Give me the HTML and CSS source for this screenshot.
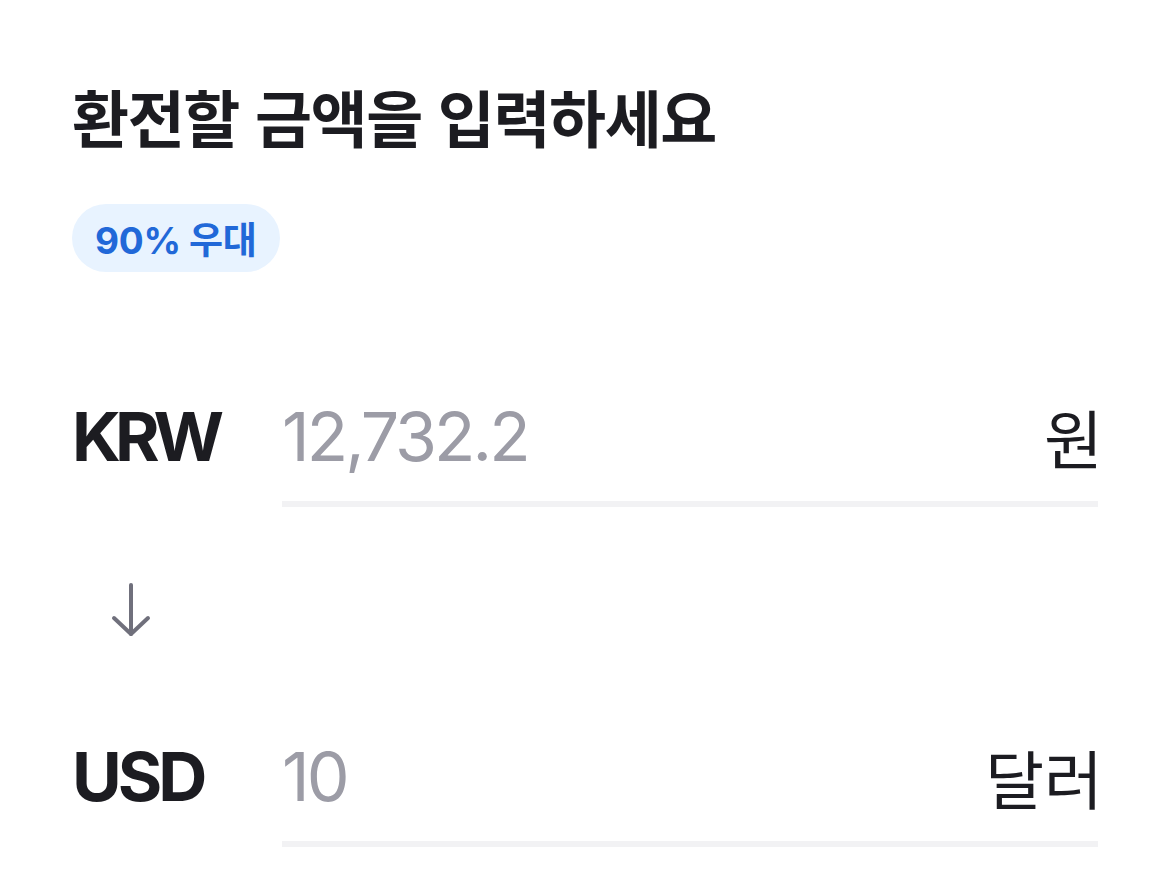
FILE: index.html
```html
<!DOCTYPE html>
<html lang="ko">
<head>
<meta charset="UTF-8" />
<meta name="viewport" content="width=device-width, initial-scale=1" />
<title>환전</title>
<link rel="stylesheet" href="styles.css">
</head>
<body>
  <main class="exchange">
    <h1 class="title">환전할 금액을 입력하세요</h1>
    <span class="badge">90% 우대</span>

    <div class="row row-from">
      <span class="code code-krw">KRW</span>
      <label class="field">
        <input class="amount" type="text" placeholder="12,732.2" />
        <span class="unit">원</span>
      </label>
    </div>

    <div class="arrow">
      <svg width="40" height="56" viewBox="0 0 40 56" fill="none" stroke="#70707c" stroke-width="4" stroke-linecap="round" stroke-linejoin="round">
        <path d="M20 3 V52" />
        <path d="M3 36 L20 52 L37 36" />
      </svg>
    </div>

    <div class="row row-to">
      <span class="code">USD</span>
      <label class="field">
        <input class="amount" type="text" placeholder="10" />
        <span class="unit">달러</span>
      </label>
    </div>
  </main>
</body>
</html>
```

FILE: styles.css
```css
body {
  margin: 0;
  background: #ffffff;
  font-family: Inter, "Noto Sans CJK KR", sans-serif;
  color: #1c1c21;
}

.exchange {
  padding: 72px 72px 0;
}

/* 제목 */
.title {
  margin: 0;
  font-family: "Noto Sans CJK KR", sans-serif;
  font-size: 62px;
  font-weight: 700;
  line-height: 88px;
  letter-spacing: -1.4px;
}

.badge {
  display: inline-flex;
  align-items: center;
  height: 68px;
  margin-top: 44px;
  padding: 0 23px 0 23px;
  border-radius: 34px;
  background: #e8f3ff;
  color: #2168d8;
  font-family: Inter, "Noto Sans CJK KR", sans-serif;
  font-size: 37px;
  font-weight: 700;
  letter-spacing: -0.3px;
}

/* 통화 입력 줄 */
.row {
  display: grid;
  grid-template-columns: 210px minmax(0, 1fr);
  align-items: start;
}

.row-from {
  margin-top: 118px;
}

.code {
  font-size: 68px;
  font-weight: 700;
  line-height: 92px;
  letter-spacing: -4px;
}

.code-krw {
  letter-spacing: -6px; /* W가 넓어서 조금 더 좁힘 */
}

.field {
  display: flex;
  align-items: center;
  justify-content: space-between;
  min-width: 0;
  border-bottom: 6px solid #f2f2f4;
  padding-bottom: 19px;
}

.amount {
  flex: 1;
  width: 0;
  min-width: 0;
  border: none;
  outline: none;
  padding: 0;
  background: transparent;
  font-family: Inter, sans-serif;
  font-size: 68px;
  font-weight: 400;
  line-height: 92px;
  height: 92px;
  letter-spacing: -3px;
  color: #1c1c21;
}

.amount::placeholder {
  color: #9c9ca6;
}

.unit {
  font-family: "Noto Sans CJK KR", sans-serif;
  font-size: 64px;
  font-weight: 400;
  line-height: 92px;
  margin-right: -5px;
}

.arrow {
  padding: 75px 0 0 39px;
  height: 56px;
}

.row-to {
  margin-top: 92px;
}
```
